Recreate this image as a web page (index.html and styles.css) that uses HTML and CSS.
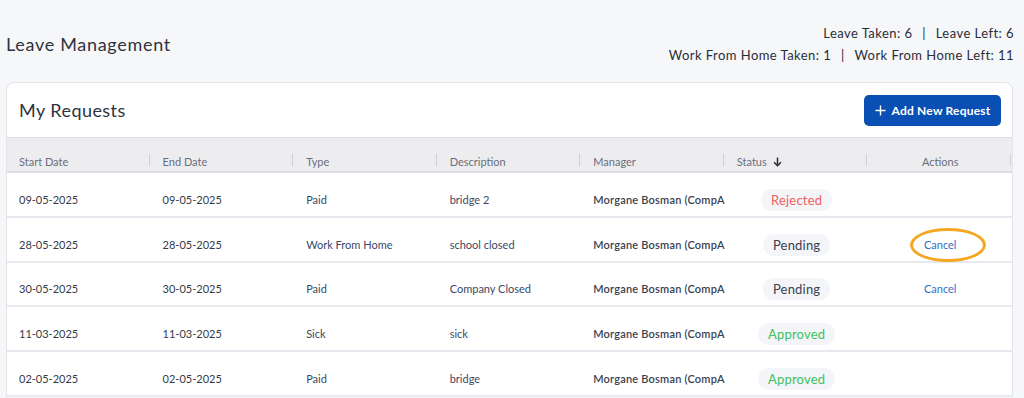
FILE: index.html
```html
<!DOCTYPE html>
<html lang="en">
<head>
<meta charset="utf-8">
<title>Leave Management</title>
<link rel="stylesheet" href="styles.css">
</head>
<body>
<div class="page">
  <header class="top">
    <h1 class="title">Leave Management</h1>
    <div class="stats">
      <div>Leave Taken: 6 <span class="sep">|</span> Leave Left: 6</div>
      <div>Work From Home Taken: 1 <span class="sep">|</span> Work From Home Left: 11</div>
    </div>
  </header>

  <section class="card">
    <div class="card-head">
      <h2 class="card-title">My Requests</h2>
      <button class="btn-add" type="button">
        <svg class="plus" width="11" height="11" viewBox="0 0 11 11" aria-hidden="true"><path d="M5.5 0.5v10M0.5 5.5h10" stroke="#fff" stroke-width="1.4" fill="none"/></svg>
        Add New Request
      </button>
    </div>

    <div class="grid thead">
      <div class="th">Start Date</div>
      <div class="th">End Date</div>
      <div class="th">Type</div>
      <div class="th">Description</div>
      <div class="th">Manager</div>
      <div class="th">Status <svg class="arrow" width="9" height="10" viewBox="0 0 9 10" aria-hidden="true"><path d="M4.5 0.5v8.2M1 5.2l3.5 3.5 3.5-3.5" stroke="#2b2f3a" stroke-width="1.5" fill="none"/></svg></div>
      <div class="th center">Actions</div>
    </div>

    <div class="grid row">
      <div class="td">09-05-2025</div>
      <div class="td">09-05-2025</div>
      <div class="td alt">Paid</div>
      <div class="td alt">bridge 2</div>
      <div class="td mgr">Morgane Bosman (CompA</div>
      <div class="td center"><span class="badge rejected">Rejected</span></div>
      <div class="td center"></div>
    </div>
    <div class="grid row">
      <div class="td">28-05-2025</div>
      <div class="td">28-05-2025</div>
      <div class="td alt">Work From Home</div>
      <div class="td alt">school closed</div>
      <div class="td mgr">Morgane Bosman (CompA</div>
      <div class="td center"><span class="badge pending">Pending</span></div>
      <div class="td center"><span class="cancel-wrap"><a class="cancel" href="#">Cancel</a><span class="ring"></span></span></div>
    </div>
    <div class="grid row">
      <div class="td">30-05-2025</div>
      <div class="td">30-05-2025</div>
      <div class="td alt">Paid</div>
      <div class="td alt">Company Closed</div>
      <div class="td mgr">Morgane Bosman (CompA</div>
      <div class="td center"><span class="badge pending">Pending</span></div>
      <div class="td center"><a class="cancel" href="#">Cancel</a></div>
    </div>
    <div class="grid row">
      <div class="td">11-03-2025</div>
      <div class="td">11-03-2025</div>
      <div class="td alt">Sick</div>
      <div class="td alt">sick</div>
      <div class="td mgr">Morgane Bosman (CompA</div>
      <div class="td center"><span class="badge approved">Approved</span></div>
      <div class="td center"></div>
    </div>
    <div class="grid row">
      <div class="td">02-05-2025</div>
      <div class="td">02-05-2025</div>
      <div class="td alt">Paid</div>
      <div class="td alt">bridge</div>
      <div class="td mgr">Morgane Bosman (CompA</div>
      <div class="td center"><span class="badge approved">Approved</span></div>
      <div class="td center"></div>
    </div>
  </section>
</div>
</body>
</html>
```

FILE: styles.css
```css
* { box-sizing: border-box; }

html, body {
  margin: 0;
  padding: 0;
  background: #f6f7f9;
  font-family: "Lato", "Open Sans", sans-serif;
  color: #2f3340;
}

.page {
  padding: 0 10px 0 6px;
}

.top {
  display: flex;
  justify-content: space-between;
  align-items: center;
  padding: 22px 0 16px;
}

.title {
  margin: 0;
  font-size: 18px;
  font-weight: 400;
  letter-spacing: 0.7px;
  color: #2f3340;
  line-height: 22px;
}

.stats {
  text-align: right;
  font-size: 13px;
  line-height: 22px;
  letter-spacing: 0.45px;
  color: #2a2d38;
}

.sep {
  margin: 0 6px;
}

.card {
  background: #fff;
  border: 1px solid #e4e5ea;
  border-bottom: 0;
  border-radius: 8px 8px 0 0;
  margin-right: 1px;
  overflow: hidden;
}

.card-head {
  height: 55px;
  display: flex;
  justify-content: space-between;
  align-items: center;
  padding: 0 11px 0 12px;
  border-bottom: 1px solid #dfe0e5;
}

.card-title {
  margin: 0;
  font-size: 18px;
  font-weight: 400;
  letter-spacing: 0.45px;
  color: #2f3340;
}

.btn-add {
  display: flex;
  align-items: center;
  gap: 6px;
  height: 31px;
  width: 137px;
  justify-content: center;
  border: 0;
  border-radius: 5px;
  background: #0a4fb4;
  color: #fff;
  font-family: inherit;
  font-size: 12px;
  font-weight: 700;
  letter-spacing: 0.2px;
}

.grid {
  display: grid;
  grid-template-columns: repeat(7, 1fr);
}

.thead {
  background: #ededf0;
  border-bottom: 2px solid #dcdde2;
  height: 35px;
}

.th {
  position: relative;
  padding: 15px 12px 0;
  font-size: 11px;
  line-height: 14px;
  color: #6a6e7c;
  display: flex;
  align-items: center;
  gap: 6px;
}

.th::after {
  content: "";
  position: absolute;
  right: 1px;
  top: 16px;
  height: 12px;
  width: 1px;
  background: #cfd0d6;
}

.th.center { justify-content: center; }

.arrow { display: block; }

.row {
  height: 44.75px;
  padding-top: 11px;
  border-bottom: 2px solid #e8e9ee;
  align-items: center;
}

.td {
  padding: 0 12px;
  font-size: 11px;
  line-height: 14px;
  color: #353a48;
  white-space: nowrap;
  overflow: hidden;
}

.td.alt { color: #3a4866; }

.td.mgr {
  font-weight: 600;
  color: #3a3f52;
  letter-spacing: 0.2px;
  padding-right: 0;
  text-overflow: clip;
}

.td.center {
  display: flex;
  justify-content: center;
  overflow: visible;
}

.badge {
  display: inline-block;
  height: 22px;
  line-height: 22px;
  padding: 0 10px;
  border-radius: 11px;
  background: #f3f5f8;
  font-size: 13px;
  letter-spacing: 0.2px;
}

.badge.rejected { color: #f2605c; }
.badge.pending { color: #3b4053; }
.badge.approved { color: #3ec25c; }

.cancel {
  color: #2f6fc4;
  font-size: 11px;
  text-decoration: none;
}

.cancel-wrap {
  position: relative;
  display: inline-block;
}

.ring {
  position: absolute;
  left: 50%;
  top: 50%;
  width: 76px;
  height: 34px;
  margin-left: -30px;
  margin-top: -17px;
  border: 3px solid #f5a623;
  border-radius: 50%;
}
```
